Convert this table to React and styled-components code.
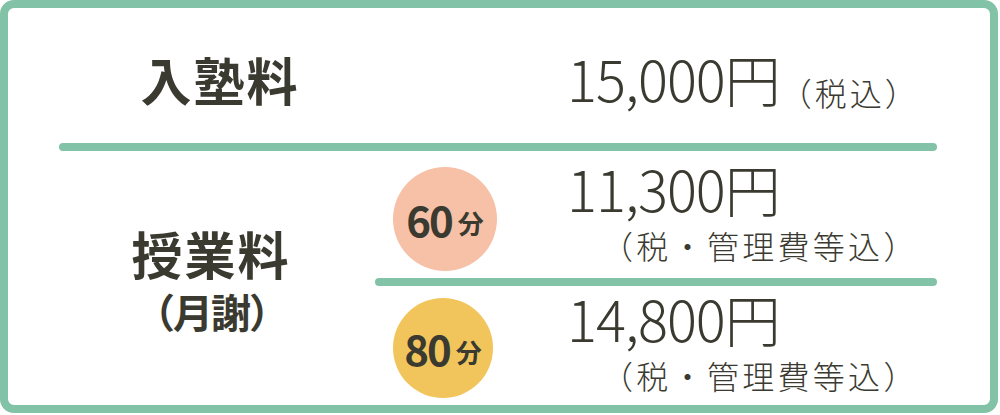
import React from "react";
import styled, { createGlobalStyle } from "styled-components";

const GlobalStyle = createGlobalStyle`
  body {
    margin: 0;
    background: #ffffff;
    font-family: "Noto Sans CJK JP", "Noto Sans", sans-serif;
    color: #3a3a30;
  }
`;

const green = "#82c2a6";

const Card = styled.div`
  width: 998px;
  height: 413px;
  box-sizing: border-box;
  border: 8px solid ${green};
  border-radius: 14px;
  padding: 0 53px 0 51px;
  display: flex;
  flex-direction: column;
  background: #ffffff;
`;

const Row = styled.div`
  display: grid;
  grid-template-columns: 316px 1fr;
  align-items: ${(p) => p.$align || "center"};
  height: ${(p) => p.$height}px;
  padding-top: ${(p) => p.$padTop || 0}px;
  box-sizing: border-box;
`;

const Divider = styled.div`
  height: 8px;
  border-radius: 4px;
  background: ${green};
  flex-shrink: 0;
`;

const Label = styled.div`
  display: flex;
  flex-direction: column;
  align-items: center;
  font-size: 51px;
  font-weight: 700;
  line-height: 1;
  letter-spacing: 2px;
  padding-left: ${(p) => p.$left || 0}px;
  padding-right: ${(p) => p.$right || 0}px;
  margin-top: ${(p) => p.$top || 0}px;
`;

const SubLabel = styled.span`
  font-size: 40px;
  line-height: 1;
  letter-spacing: -2px;
  margin-top: 12px;
`;

const FeeCell = styled.div`
  display: flex;
  align-items: flex-start;
  padding-left: 192px;
`;

const Price = styled.div`
  font-size: 56px;
  font-weight: 300;
  line-height: 1;
  letter-spacing: -1px;
`;

const Note = styled.div`
  font-size: 32px;
  font-weight: 300;
  line-height: 1;
  letter-spacing: ${(p) => p.$spacing || 3.3}px;
  margin-left: ${(p) => p.$indent || 0}px;
  margin-top: ${(p) => p.$gap || 0}px;
`;

const Plans = styled.div`
  display: flex;
  flex-direction: column;
  height: 100%;
`;

const Plan = styled.div`
  display: flex;
  align-items: flex-start;
  height: ${(p) => p.$height}px;
  padding-left: 18px;
  box-sizing: border-box;
`;

const Badge = styled.div`
  width: ${(p) => p.$size}px;
  height: ${(p) => p.$size}px;
  margin-top: ${(p) => p.$top}px;
  border-radius: 50%;
  background: ${(p) => p.$bg};
  display: flex;
  align-items: center;
  justify-content: center;
  font-weight: 700;
  line-height: 1;
  flex-shrink: 0;

  span {
    font-size: 42px;
    letter-spacing: -2px;
  }

  small {
    font-size: 26px;
    margin-left: 6px;
    margin-top: 8px;
  }
`;

const PriceBlock = styled.div`
  display: flex;
  flex-direction: column;
  margin-left: ${(p) => p.$left}px;
  margin-top: ${(p) => p.$top}px;
`;

const plans = [
  { min: 60, bg: "#f6c1a7", price: "11,300円", height: 127, size: 104, badgeTop: 16, left: 70, priceTop: 9 },
  { min: 80, bg: "#f2c55c", price: "14,800円", height: 119, size: 100, badgeTop: 12, left: 74, priceTop: 4 },
];

const App = () => {
  return (
    <>
      <GlobalStyle />
      <Card>
        <Row $height={135} $align="start" $padTop={42}>
          <Label $left={6} $top={4}>
            入塾料
          </Label>
          <FeeCell>
            <Price>15,000円</Price>
            <Note $gap={26} $spacing={3}>
              （税込）
            </Note>
          </FeeCell>
        </Row>
        <Divider />
        <Row $height={254}>
          <Label $right={12} $top={2}>
            授業料
            <SubLabel>（月謝）</SubLabel>
          </Label>
          <Plans>
            {plans.map((plan, index) => (
              <React.Fragment key={plan.min}>
                {index > 0 && <Divider />}
                <Plan $height={plan.height}>
                  <Badge $bg={plan.bg} $size={plan.size} $top={plan.badgeTop}>
                    <span>{plan.min}</span>
                    <small>分</small>
                  </Badge>
                  <PriceBlock $left={plan.left} $top={plan.priceTop}>
                    <Price>{plan.price}</Price>
                    <Note $indent={34} $gap={13}>
                      （税・管理費等込）
                    </Note>
                  </PriceBlock>
                </Plan>
              </React.Fragment>
            ))}
          </Plans>
        </Row>
      </Card>
    </>
  );
};

export default App;
